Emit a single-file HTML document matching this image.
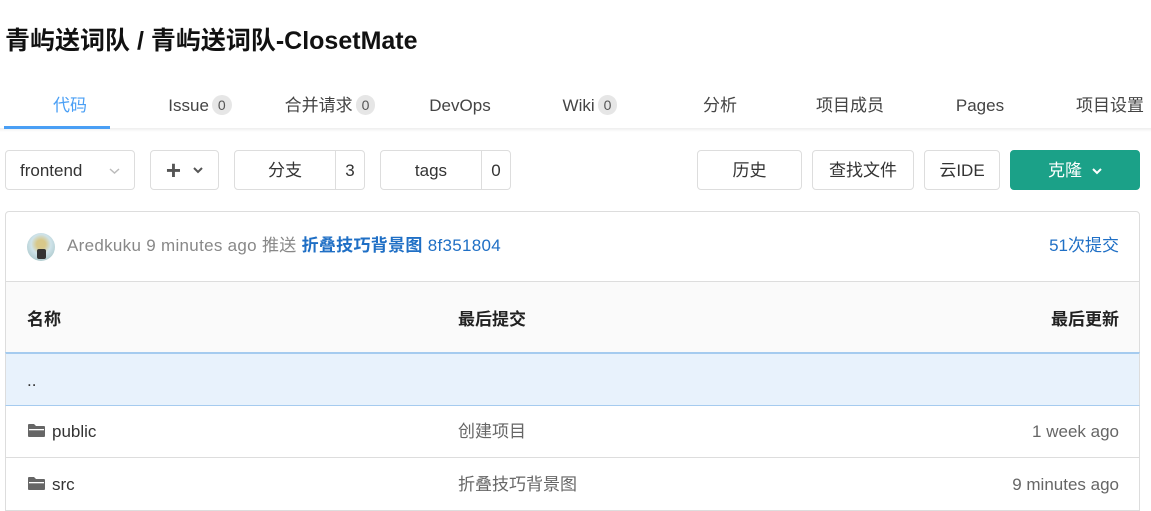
<!DOCTYPE html>
<html><head><meta charset="utf-8"><style>
*{box-sizing:border-box;margin:0;padding:0}
body{width:1151px;height:511px;overflow:hidden;background:#fff;font-family:"Liberation Sans","Noto Sans CJK SC",sans-serif;color:#333;position:relative;line-height:22px}
.a{position:absolute;line-height:22px;white-space:nowrap}
h1{position:absolute;left:5px;top:28px;font-size:25px;line-height:26px;font-weight:bold;color:#111}
.tab{position:absolute;top:95px;width:130px;text-align:center;font-size:17px;line-height:22px;color:#444}
.badge{display:inline-block;background:#e6e6e6;border-radius:10px;font-size:14px;line-height:20px;padding:0 6px;color:#555;margin-left:3px;vertical-align:top}
.btn{position:absolute;top:150px;height:40px;border:1px solid #ddd;border-radius:4px;font-size:17px;line-height:22px;color:#333;display:flex;align-items:center;justify-content:center;background:#fff;padding-top:2px}
.row{position:absolute;left:5px;width:1135px;border-left:1px solid #ddd;border-right:1px solid #ddd;font-size:17px}
</style></head><body>
<h1>青屿送词队 / 青屿送词队-ClosetMate</h1>
<div class="tab" style="left:5px;color:#4a9ff5">代码</div>
<div class="tab" style="left:135px">Issue<span class="badge">0</span></div>
<div class="tab" style="left:265px">合并请求<span class="badge">0</span></div>
<div class="tab" style="left:395px">DevOps</div>
<div class="tab" style="left:525px">Wiki<span class="badge">0</span></div>
<div class="tab" style="left:655px">分析</div>
<div class="tab" style="left:785px">项目成员</div>
<div class="tab" style="left:915px">Pages</div>
<div class="tab" style="left:1045px">项目设置</div>
<div class="a" style="left:0;top:128px;width:1151px;height:4px;background:linear-gradient(#eee,#fff)"></div>
<div class="a" style="left:4px;top:126px;width:106px;height:3px;background:#4a9ff5"></div>

<div class="btn" style="left:5px;width:130px;justify-content:space-between;padding:2px 14px 0">frontend<svg width="11" height="7"><path d="M1 1L5.5 5L10 1" stroke="#bbb" stroke-width="1.5" fill="none"/></svg></div>
<div class="btn" style="left:150px;width:69px;gap:12px;padding-top:0"><span style="font-size:26px;font-weight:bold;color:#555">+</span><svg width="10" height="7"><path d="M1 1L5 5L9 1" stroke="#555" stroke-width="2" fill="none"/></svg></div>
<div class="btn" style="left:234px;width:131px;justify-content:flex-start;padding-top:0"><span style="width:101px;text-align:center;border-right:1px solid #ddd;line-height:38px;padding-top:2px">分支</span><span style="width:28px;text-align:center;padding-top:2px">3</span></div>
<div class="btn" style="left:380px;width:131px;justify-content:flex-start;padding-top:0"><span style="width:101px;text-align:center;border-right:1px solid #ddd;line-height:38px;padding-top:2px">tags</span><span style="width:28px;text-align:center;padding-top:2px">0</span></div>
<div class="btn" style="left:697px;width:105px">历史</div>
<div class="btn" style="left:812px;width:102px">查找文件</div>
<div class="btn" style="left:924px;width:76px">云IDE</div>
<div class="btn" style="left:1010px;width:130px;background:#1ba188;border-color:#1ba188;color:#fff;gap:10px">克隆<svg width="10" height="7"><path d="M1 1L5 5L9 1" stroke="#fff" stroke-width="2" fill="none"/></svg></div>

<div class="row" style="top:211px;height:71px;border-top:1px solid #ddd;border-radius:4px 4px 0 0;border-bottom:1px solid #ddd">
<div class="a" style="left:21px;top:21px;width:28px;height:28px;border-radius:50%;background:radial-gradient(circle at 50% 40%,#d8c88a 20%,#cfe3ea 45%,#9bb 100%)"><div class="a" style="left:10px;top:16px;width:9px;height:10px;background:#333;border-radius:2px"></div></div>
<div class="a" style="left:61px;top:23px;color:#888;letter-spacing:0.3px">Aredkuku 9 minutes ago 推送 <b style="color:#1f6fc5">折叠技巧背景图</b> <span style="color:#1f6fc5">8f351804</span></div>
<div class="a" style="right:20px;top:23px;color:#1f6fc5">51次提交</div>
</div>
<div class="row" style="top:282px;height:71px;background:#fafafa;font-weight:bold;color:#222">
<div class="a" style="left:21px;top:27px">名称</div><div class="a" style="left:452px;top:27px">最后提交</div><div class="a" style="right:20px;top:27px">最后更新</div>
</div>
<div class="row" style="top:352px;height:54px;background:#e8f2fc;border-top:2px solid #a5cbef;border-bottom:1px solid #a5cbef"><div class="a" style="left:21px;top:16px">..</div></div>
<div class="row" style="top:406px;height:52px;border-bottom:1px solid #ddd">
<svg class="a" style="left:21px;top:17px" width="19" height="15"><path d="M1 2Q1 1 2 1H7L9 3H17Q18 3 18 4V13Q18 14 17 14H2Q1 14 1 13Z" fill="#666"/><rect x="2" y="6" width="15" height="1.3" fill="#fff"/></svg>
<div class="a" style="left:46px;top:15px">public</div><div class="a" style="left:452px;top:15px;color:#666">创建项目</div><div class="a" style="right:20px;top:15px;color:#666">1 week ago</div></div>
<div class="row" style="top:458px;height:53px;border-bottom:1px solid #ddd">
<svg class="a" style="left:21px;top:18px" width="19" height="15"><path d="M1 2Q1 1 2 1H7L9 3H17Q18 3 18 4V13Q18 14 17 14H2Q1 14 1 13Z" fill="#666"/><rect x="2" y="6" width="15" height="1.3" fill="#fff"/></svg>
<div class="a" style="left:46px;top:16px">src</div><div class="a" style="left:452px;top:16px;color:#666">折叠技巧背景图</div><div class="a" style="right:20px;top:16px;color:#666">9 minutes ago</div></div>
</body></html>
